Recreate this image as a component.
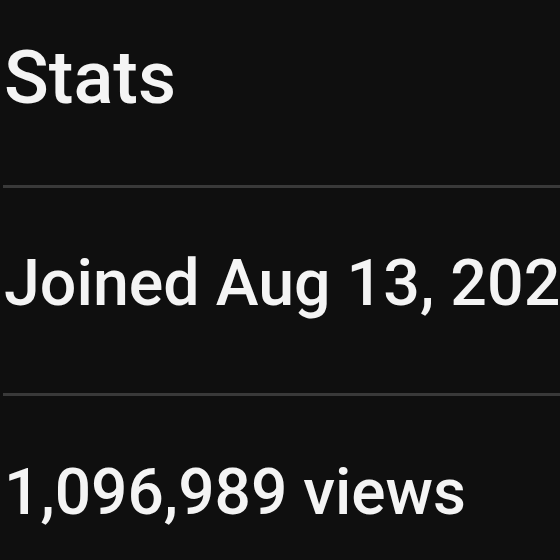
export default function App() {
  return (
    <div
      className="h-[560px] w-[560px] overflow-hidden bg-[#0f0f0f] pl-[3px] text-[#f4f4f4]"
      style={{ fontFamily: 'Roboto, "Liberation Sans", sans-serif' }}
    >
      <div className="pt-[38px] pl-[1px] text-[74px] leading-[80px] font-medium whitespace-nowrap">
        Stats
      </div>
      <div className="mt-[67px] h-[3px] w-full bg-[#393939]" />
      <div className="mt-[59px] pl-[1px] text-[64.5px] leading-[72px] font-medium whitespace-nowrap">
        Joined Aug 13, 2020
      </div>
      <div className="mt-[74px] h-[3px] w-full bg-[#393939]" />
      <div className="mt-[61px] pl-[1px] text-[64px] leading-[72px] font-medium whitespace-nowrap">
        1,096,989 views
      </div>
    </div>
  );
}
